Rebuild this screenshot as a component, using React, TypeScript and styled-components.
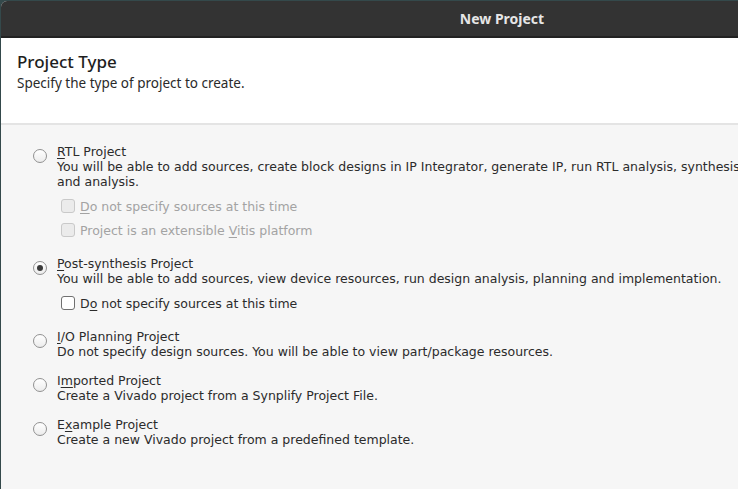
import styled, { createGlobalStyle } from "styled-components";

const GlobalStyle = createGlobalStyle`
  html, body {
    margin: 0;
    padding: 0;
    background: #34494b;
    overflow: hidden;
  }

  *, *::before, *::after {
    box-sizing: border-box;
  }
`;

interface SubOption {
  label: React.ReactNode;
  disabled?: boolean;
}

interface ProjectOption {
  id: string;
  title: React.ReactNode;
  lines: string[];
  checked?: boolean;
  subOptions?: SubOption[];
}

const options: ProjectOption[] = [
  {
    id: "rtl",
    title: (
      <>
        <Key>R</Key>TL Project
      </>
    ),
    lines: [
      "You will be able to add sources, create block designs in IP Integrator, generate IP, run RTL analysis, synthesis, implementation, design planning",
      "and analysis.",
    ],
    subOptions: [
      {
        label: (
          <>
            <Key>D</Key>o not specify sources at this time
          </>
        ),
        disabled: true,
      },
      {
        label: (
          <>
            Project is an extensible <Key>V</Key>itis platform
          </>
        ),
        disabled: true,
      },
    ],
  },
  {
    id: "post",
    title: (
      <>
        <Key>P</Key>ost-synthesis Project
      </>
    ),
    lines: [
      "You will be able to add sources, view device resources, run design analysis, planning and implementation.",
    ],
    checked: true,
    subOptions: [
      {
        label: (
          <>
            D<Key>o</Key> not specify sources at this time
          </>
        ),
      },
    ],
  },
  {
    id: "io",
    title: (
      <>
        <Key>I</Key>/O Planning Project
      </>
    ),
    lines: [
      "Do not specify design sources. You will be able to view part/package resources.",
    ],
  },
  {
    id: "imported",
    title: (
      <>
        I<Key>m</Key>ported Project
      </>
    ),
    lines: ["Create a Vivado project from a Synplify Project File."],
  },
  {
    id: "example",
    title: (
      <>
        E<Key>x</Key>ample Project
      </>
    ),
    lines: ["Create a new Vivado project from a predefined template."],
  },
];

const App = () => {
  return (
    <>
      <GlobalStyle />
      <Window>
        <TitleBar>
          <TitleText>New Project</TitleText>
        </TitleBar>

        <Header>
          <HeaderTitle>Project Type</HeaderTitle>
          <HeaderSubtitle>Specify the type of project to create.</HeaderSubtitle>
        </Header>

        <Body>
          {options.map((opt) => (
            <Option key={opt.id}>
              <Radio checked={opt.checked} />
              <OptionText>
                <OptionTitle>{opt.title}</OptionTitle>
                {opt.lines.map((line, i) => (
                  <OptionLine key={i}>{line}</OptionLine>
                ))}
                {opt.subOptions && (
                  <SubList>
                    {opt.subOptions.map((sub, i) => (
                      <SubRow key={i} $disabled={sub.disabled}>
                        <CheckBox $disabled={sub.disabled} />
                        <span>{sub.label}</span>
                      </SubRow>
                    ))}
                  </SubList>
                )}
              </OptionText>
            </Option>
          ))}
        </Body>
      </Window>
    </>
  );
};

function Key({ children }: { children: React.ReactNode }) {
  return <Mnemonic>{children}</Mnemonic>;
}

// Styled Components
const Window = styled.div`
  margin: 1px 0 0 1px;
  width: 1002px;
  height: 488px;
  border-top-left-radius: 6px;
  overflow: hidden;
  background-color: #f6f6f6;
  display: flex;
  flex-direction: column;
`;

const TitleBar = styled.div`
  height: 37px;
  background-color: #333333;
  border-bottom: 2px solid #222222;
  display: flex;
  align-items: center;
  justify-content: center;
`;

const TitleText = styled.div`
  font-family: "Noto Sans", "DejaVu Sans", sans-serif;
  font-weight: 700;
  font-size: 14px;
  color: #e6e6e6;
`;

const Header = styled.div`
  background-color: #ffffff;
  height: 87px;
  padding: 13px 0 0 16px;
  border-bottom: 2px solid #e4e4e4;
`;

const HeaderTitle = styled.div`
  font-family: "Noto Sans", "DejaVu Sans", sans-serif;
  font-weight: 500;
  font-size: 17px;
  line-height: 21px;
  color: #1e1e1e;
`;

const HeaderSubtitle = styled.div`
  font-family: "Noto Sans", "DejaVu Sans", sans-serif;
  font-size: 13.5px;
  line-height: 18px;
  margin-top: 2px;
  color: #2a2a2a;
`;

const Body = styled.div`
  flex: 1;
  padding: 19px 0 0 32px;
  display: flex;
  flex-direction: column;
  gap: 14px;
  font-family: "DejaVu Sans", "Liberation Sans", sans-serif;
  font-size: 12.5px;
  line-height: 15px;
  color: #2b2b2b;
`;

const Option = styled.div`
  display: flex;
  align-items: flex-start;
  gap: 10px;
`;

const Radio = styled.div<{ checked?: boolean }>`
  flex: none;
  width: 14px;
  height: 14px;
  margin-top: 5px;
  border-radius: 50%;
  border: 1px solid #919191;
  background: linear-gradient(#ffffff, #ececec);
  display: flex;
  align-items: center;
  justify-content: center;

  &::after {
    content: "";
    width: 6px;
    height: 6px;
    border-radius: 50%;
    background-color: #3a3a3a;
    opacity: ${(props) => (props.checked ? 1 : 0)};
  }
`;

const OptionText = styled.div`
  display: flex;
  flex-direction: column;
  white-space: nowrap;
`;

const OptionTitle = styled.div``;

const OptionLine = styled.div``;

const SubList = styled.div`
  margin-top: 5px;
  padding-left: 4px;
  display: flex;
  flex-direction: column;
`;

const SubRow = styled.div<{ $disabled?: boolean }>`
  height: 24px;
  display: flex;
  align-items: center;
  gap: 5px;
  color: ${(props) => (props.$disabled ? "#a3a3a3" : "#2b2b2b")};
`;

const CheckBox = styled.div<{ $disabled?: boolean }>`
  flex: none;
  width: 14px;
  height: 14px;
  border-radius: 3px;
  border: 1px solid ${(props) => (props.$disabled ? "#c9c9c9" : "#707070")};
  background-color: ${(props) => (props.$disabled ? "#ebebeb" : "#ffffff")};
`;

const Mnemonic = styled.span`
  text-decoration: underline;
  text-underline-offset: 2px;
`;

export default App;
